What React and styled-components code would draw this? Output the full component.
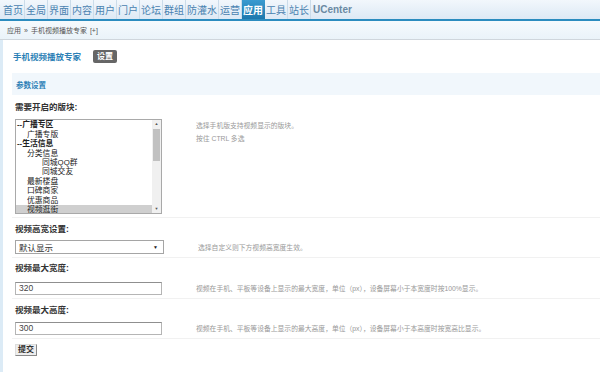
import React from "react";
import styled, { createGlobalStyle } from "styled-components";

const Global = createGlobalStyle`
  html, body { margin: 0; padding: 0; background: #fff; }
  body {
    font-family: "Liberation Sans", "Noto Sans CJK SC", sans-serif;
    font-size: 9px;
    color: #333;
  }
`;

const Page = styled.div`
  width: 600px;
  height: 372px;
  overflow: hidden;
  display: flex;
  flex-direction: column;
`;

const TopNav = styled.div`
  height: 19px;
  display: flex;
  align-items: stretch;
  padding-left: 2px;
  background: linear-gradient(#f2f7fc, #dde9f5);
  border-bottom: 2px solid #2b8cbf;
`;

const NavItem = styled.div`
  display: flex;
  align-items: center;
  padding: 0 1px;
  font-size: 10px;
  color: ${(p) => (p.active ? "#fff" : p.strong ? "#6a8aa3" : "#4a82b0")};
  font-weight: ${(p) => (p.active || p.strong ? "bold" : "normal")};
  background: ${(p) => (p.active ? "linear-gradient(#3a9bd0, #1d78ad)" : "transparent")};
  border-right: 1px solid ${(p) => (p.active || p.strong ? "transparent" : "#cbdcea")};
  padding-left: ${(p) => (p.strong ? "2px" : "1px")};
`;

const Crumb = styled.div`
  height: 18px;
  display: flex;
  align-items: center;
  gap: 3px;
  padding-left: 7px;
  font-size: 7px;
  color: #555;
  background: linear-gradient(#f5fafd, #eaf3f9);
  border-bottom: 1px solid #cfd6dc;
`;

const Body = styled.div`
  flex: 1;
  border-left: 3px solid #dcebf6;
  padding: 8px 0 0 9px;
  display: flex;
  flex-direction: column;
  align-items: stretch;
`;

const TitleRow = styled.div`
  display: flex;
  align-items: center;
  gap: 12px;
  height: 16px;
  padding-left: 1px;
`;

const Title = styled.div`
  font-size: 8.5px;
  font-weight: bold;
  color: #2b7fb6;
`;

const DarkBtn = styled.span`
  background: #666;
  color: #fff;
  font-size: 8px;
  font-weight: bold;
  padding: 1px 4px;
  border-radius: 2px;
  line-height: 11px;
`;

const Section = styled.div`
  margin-top: 9px;
  height: 22px;
  display: flex;
  align-items: center;
  padding-left: 4px;
  background: #f1f7fc;
  color: #2b7fb6;
  font-weight: bold;
  font-size: 7.5px;
`;

const Label = styled.div`
  font-weight: bold;
  font-size: 8.5px;
  color: #333;
  height: 12px;
  line-height: 12px;
  padding-left: 3px;
  margin-top: ${(p) => p.top}px;
`;

const Row = styled.div`
  display: flex;
  align-items: ${(p) => (p.top ? "flex-start" : "center")};
  padding: ${(p) => p.padTop}px 0 3px 3px;
  border-bottom: 1px solid #f1f1f1;
`;

const ListBox = styled.div`
  flex-shrink: 0;
  width: 145px;
  height: 93px;
  border: 1px solid #a9a9a9;
  display: flex;
  overflow: hidden;
  background: #fff;
`;

const ListItems = styled.div`
  flex: 1;
  margin-top: -9px;
  display: flex;
  flex-direction: column;
`;

const Option = styled.div`
  flex-shrink: 0;
  height: 9.4px;
  line-height: 9.4px;
  font-size: 7.8px;
  padding-left: ${(p) => p.indent}px;
  font-weight: ${(p) => (p.bold ? "bold" : "normal")};
  color: #222;
  background: ${(p) => (p.selected ? "#cfcfcf" : "transparent")};
  white-space: nowrap;
  overflow: hidden;
`;

const Scrollbar = styled.div`
  width: 9px;
  background: #f0f0f0;
  display: flex;
  flex-direction: column;
  align-items: center;
`;

const Arrow = styled.div`
  height: 8px;
  font-size: 4px;
  line-height: 8px;
  color: #555;
`;

const Thumb = styled.div`
  width: 7px;
  height: 32px;
  margin-top: 1px;
  background: #c1c1c1;
`;

const Track = styled.div`
  flex: 1;
`;

const Tips = styled.div`
  margin-left: 34px;
  font-size: 6.8px;
  line-height: 13px;
  color: #999;
  white-space: nowrap;
`;

const SelectBox = styled.div`
  flex-shrink: 0;
  width: 139px;
  height: 12px;
  border: 1px solid #a5a5a5;
  display: flex;
  align-items: center;
  justify-content: space-between;
  padding: 0 5px 0 3px;
  font-size: 8.5px;
  color: #333;
  background: #fff;
`;

const Caret = styled.span`
  font-size: 5px;
  color: #222;
`;

const Input = styled.div`
  flex-shrink: 0;
  width: 142px;
  height: 11px;
  border: 1px solid #b5b5b5;
  border-top-color: #8f8f8f;
  padding-left: 3px;
  font-size: 8.5px;
  line-height: 11px;
  color: #444;
  background: #fff;
`;

const Submit = styled.button`
  align-self: flex-start;
  margin: 5px 0 0 3px;
  padding: 0 2px;
  height: 12px;
  font-size: 8px;
  line-height: 10px;
  font-weight: bold;
  font-family: inherit;
  background: #eee;
  color: #333;
  border: 1px solid #888;
  border-top-color: #ddd;
  border-left-color: #ddd;
  border-radius: 0;
`;

const navs = ["首页", "全局", "界面", "内容", "用户", "门户", "论坛", "群组", "防灌水", "运营", "应用", "工具", "站长"];

const forums = [
  { t: "--广播专区", bold: true, indent: 1 },
  { t: "广播专版", indent: 11 },
  { t: "--生活信息", bold: true, indent: 1 },
  { t: "分类信息", indent: 11 },
  { t: "同城QQ群", indent: 26 },
  { t: "同城交友", indent: 26 },
  { t: "最新楼盘", indent: 11 },
  { t: "口碑商家", indent: 11 },
  { t: "优惠商品", indent: 11 },
  { t: "视频逛街", indent: 11, selected: true },
];

export default function App() {
  return (
    <Page>
      <Global />
      <TopNav>
        {navs.map((n) => (
          <NavItem key={n} active={n === "应用"}>{n}</NavItem>
        ))}
        <NavItem strong>UCenter</NavItem>
      </TopNav>
      <Crumb>
        <span>应用</span>
        <span>»</span>
        <span>手机视频播放专家</span>
        <span>[+]</span>
      </Crumb>
      <Body>
        <TitleRow>
          <Title>手机视频播放专家</Title>
          <DarkBtn>设置</DarkBtn>
        </TitleRow>
        <Section>参数设置</Section>

        <Label top={6}>需要开启的版块:</Label>
        <Row top padTop={6}>
          <ListBox>
            <ListItems>
              <Option indent={1}>—</Option>
              {forums.map((f) => (
                <Option key={f.t} indent={f.indent} bold={f.bold} selected={f.selected}>
                  {f.t}
                </Option>
              ))}
            </ListItems>
            <Scrollbar>
              <Arrow>▲</Arrow>
              <Thumb />
              <Track />
              <Arrow>▼</Arrow>
            </Scrollbar>
          </ListBox>
          <Tips>
            选择手机版支持视频显示的版块。
            <br />
            按住 CTRL 多选
          </Tips>
        </Row>

        <Label top={5}>视频高宽设置:</Label>
        <Row padTop={5}>
          <SelectBox>
            <span>默认显示</span>
            <Caret>▼</Caret>
          </SelectBox>
          <Tips>选择自定义则下方视频高宽度生效。</Tips>
        </Row>

        <Label top={4}>视频最大宽度:</Label>
        <Row padTop={8}>
          <Input>320</Input>
          <Tips>视频在手机、平板等设备上显示的最大宽度，单位（px），设备屏幕小于本宽度时按100%显示。</Tips>
        </Row>

        <Label top={5}>视频最大高度:</Label>
        <Row padTop={6}>
          <Input>300</Input>
          <Tips>视频在手机、平板等设备上显示的最大高度，单位（px），设备屏幕小于本高度时按宽高比显示。</Tips>
        </Row>

        <Submit>提交</Submit>
      </Body>
    </Page>
  );
}
